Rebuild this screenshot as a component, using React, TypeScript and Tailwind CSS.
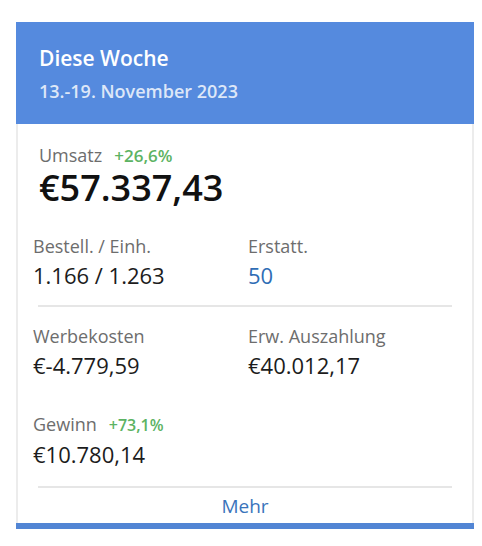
// Weekly summary card
import React from 'react';

const font = { fontFamily: '"Open Sans", "Liberation Sans", sans-serif' };

interface StatProps {
  label: string;
  value: string;
  change?: string;
  valueClass?: string;
}

const Stat: React.FC<StatProps> = ({ label, value, change, valueClass = 'text-[#1c1c1c]' }) => (
  <div>
    <div className="flex items-baseline gap-[12px] text-[18px] leading-6 text-[#6d6d6d]">
      <span>{label}</span>
      {change && <span className="text-[16px] font-semibold text-[#5cb363]">{change}</span>}
    </div>
    <div className={`text-[22px] leading-[34px] ${valueClass}`}>{value}</div>
  </div>
);

const App: React.FC = () => {
  return (
    <div className="min-h-[546px] bg-white pt-[22px] pl-4" style={font}>
      <div className="w-[458px]">
        {/* Header */}
        <div className="bg-[#558ade] px-[23px] pt-[22px] pb-[21px]">
          <div className="text-[21px] font-semibold leading-[28px] text-white">Diese Woche</div>
          <div className="mt-[7px] text-[18px] font-semibold leading-6 text-[#dde7f8]">
            13.-19. November 2023
          </div>
        </div>

        {/* Body */}
        <div className="border-x-2 border-[#ececec] pt-[19px]">
          <div className="px-[21px]">
            <div className="flex items-baseline gap-[12px] text-[18px] leading-6 text-[#6d6d6d]">
              <span>Umsatz</span>
              <span className="text-[17px] font-semibold text-[#5cb363]">+26,6%</span>
            </div>
            <div className="text-[36px] font-semibold leading-[40px] text-[#111]">€57.337,43</div>
          </div>

          <div className="mt-[26px] grid grid-cols-[215px_1fr] px-[15px]">
            <Stat label="Bestell. / Einh." value="1.166 / 1.263" />
            <Stat label="Erstatt." value="50" valueClass="text-[#2f6db5]" />
          </div>

          <div className="mx-5 mt-[13px] h-[2px] bg-[#e6e6e6]" />

          <div className="mt-[17px] grid grid-cols-[215px_1fr] gap-y-[30px] px-[15px]">
            <Stat label="Werbekosten" value="€-4.779,59" />
            <Stat label="Erw. Auszahlung" value="€40.012,17" />
            <Stat label="Gewinn" value="€10.780,14" change="+73,1%" />
          </div>

          <div className="mx-5 mt-[15px] h-[2px] bg-[#e6e6e6]" />

          <div className="pt-[6px] pb-[5px] text-center text-[19px] leading-6 text-[#3a74bb]">Mehr</div>
        </div>
        <div className="h-[6px] bg-[#5285d4]" />
      </div>
    </div>
  );
};

export default App;
